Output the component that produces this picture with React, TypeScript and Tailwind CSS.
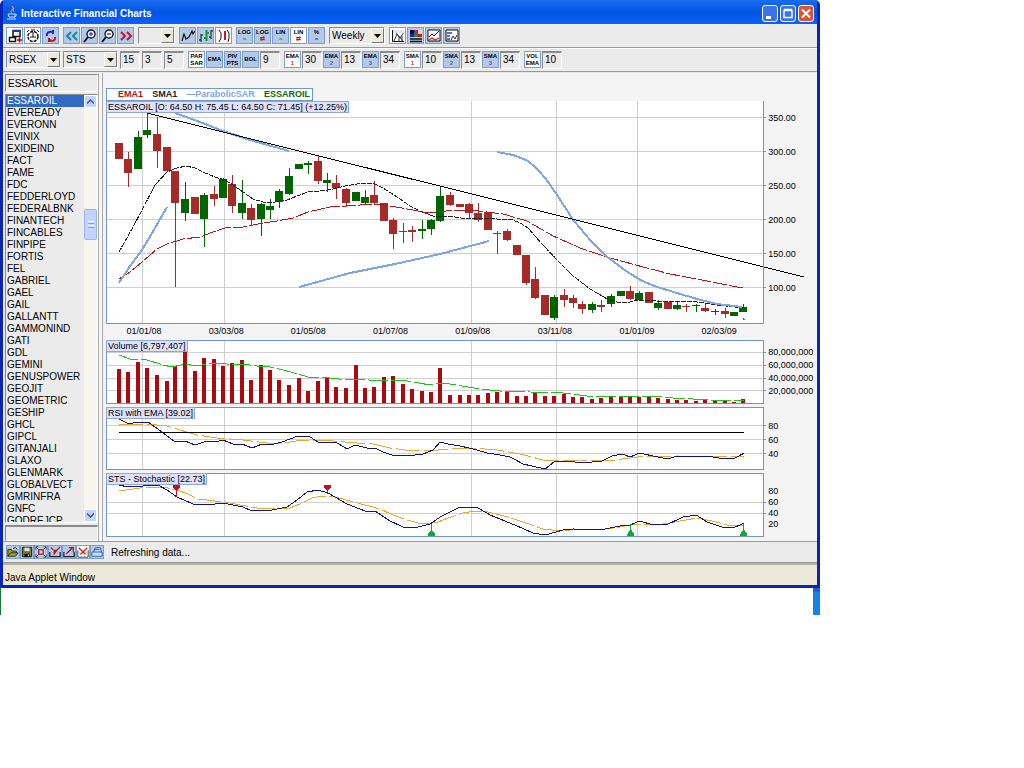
import React from 'react'

// Symbols shown in the left list
const symbols = [
  'ESSAROIL', 'EVEREADY', 'EVERONN', 'EVINIX', 'EXIDEIND', 'FACT', 'FAME', 'FDC', 'FEDDERLOYD',
  'FEDERALBNK', 'FINANTECH', 'FINCABLES', 'FINPIPE', 'FORTIS', 'FEL', 'GABRIEL', 'GAEL', 'GAIL',
  'GALLANTT', 'GAMMONIND', 'GATI', 'GDL', 'GEMINI', 'GENUSPOWER', 'GEOJIT', 'GEOMETRIC', 'GESHIP',
  'GHCL', 'GIPCL', 'GITANJALI', 'GLAXO', 'GLENMARK', 'GLOBALVECT', 'GMRINFRA', 'GNFC', 'GODREJCP',
]

const dates = ['01/01/08', '03/03/08', '01/05/08', '01/07/08', '01/09/08', '03/11/08', '01/01/09', '02/03/09']

// x, wick top, body top, body bottom, wick bottom, up (1) or down (0)
const candles = [
  [119, 143, 143, 159, 159, 0], [128, 152, 159, 173, 187, 0], [138, 131, 137, 169, 169, 1],
  [147, 113, 130, 135, 138, 1], [157, 117, 134, 151, 168, 0], [167, 147, 147, 171, 171, 0],
  [175, 171, 171, 203, 287, 0], [185, 182, 199, 213, 221, 1], [195, 197, 197, 214, 214, 0],
  [204, 193, 195, 219, 247, 1], [214, 186, 194, 199, 206, 0], [223, 178, 179, 198, 198, 1],
  [232, 175, 184, 206, 213, 0], [242, 180, 203, 213, 219, 1], [251, 204, 208, 220, 225, 0],
  [261, 203, 204, 219, 236, 1], [270, 199, 206, 210, 219, 1], [279, 189, 191, 202, 208, 1],
  [289, 168, 176, 194, 195, 1], [299, 164, 164, 169, 169, 1], [308, 161, 163, 165, 174, 1],
  [318, 156, 161, 181, 184, 0], [327, 173, 180, 183, 192, 1], [336, 175, 183, 188, 199, 0],
  [346, 188, 189, 203, 206, 0], [356, 192, 192, 201, 201, 1], [365, 190, 197, 203, 204, 1],
  [374, 181, 195, 203, 204, 0], [384, 203, 203, 221, 221, 0], [393, 218, 220, 234, 249, 0],
  [403, 223, 231, 232, 243, 0], [412, 226, 230, 232, 242, 0], [422, 220, 229, 231, 239, 1],
  [431, 219, 220, 229, 235, 1], [440, 186, 196, 221, 222, 1], [450, 192, 195, 205, 206, 0],
  [460, 204, 204, 207, 207, 0], [469, 203, 204, 213, 219, 0], [478, 203, 213, 220, 222, 0],
  [488, 212, 212, 230, 230, 0], [497, 231, 233, 234, 254, 0], [507, 229, 231, 240, 241, 0],
  [517, 245, 245, 255, 255, 0], [526, 255, 255, 283, 285, 0], [535, 267, 279, 298, 299, 0],
  [545, 295, 295, 315, 315, 0], [554, 295, 297, 318, 320, 1], [564, 289, 295, 300, 307, 0],
  [573, 295, 298, 303, 308, 0], [582, 301, 304, 309, 314, 0], [592, 302, 304, 310, 313, 1],
  [601, 300, 305, 307, 312, 0], [611, 294, 296, 304, 307, 1], [621, 291, 291, 296, 296, 1],
  [630, 286, 291, 299, 300, 0], [639, 291, 293, 300, 301, 1], [649, 292, 292, 303, 303, 0],
  [658, 300, 303, 308, 310, 1], [668, 302, 302, 309, 309, 0], [677, 301, 305, 309, 310, 1],
  [686, 304, 306, 307, 312, 0], [696, 304, 305, 306, 312, 1], [705, 304, 308, 311, 312, 0],
  [715, 309, 311, 312, 315, 1], [725, 308, 311, 314, 318, 0], [734, 312, 312, 316, 316, 1],
  [743, 304, 307, 312, 312, 1],
]

// Top of every volume bar, one for each candle
const volumes = [
  369, 372, 362, 368, 375, 381, 366, 352, 371, 358, 359, 366, 363, 360, 380, 365, 370, 380, 385, 378,
  391, 381, 378, 387, 388, 365, 388, 387, 377, 376, 384, 389, 391, 392, 368, 395, 395, 395, 395, 393,
  392, 392, 396, 396, 393, 396, 396, 394, 397, 397, 399, 398, 396, 396, 396, 397, 397, 398, 399, 400,
  400, 401, 400, 401, 401, 402, 399,
]

const sma = '119,252 133,227 142,210 155,185 167,172 177,168 186,166 195,168 205,173 215,177 225,180 233,185 243,192 253,199 263,202 275,202 287,200 297,196 308,192 320,191 333,189 345,186 357,184 367,183 375,184 383,188 397,197 410,206 422,212 433,216 443,216 455,217 467,219 480,218 497,219 510,219 520,223 528,228 540,242 557,260 573,276 590,289 607,299 617,302 630,302 637,300 657,301 697,302 717,305 743,308'
const ema = '119,279 130,272 142,262 157,249 167,244 183,239 200,237 213,232 225,228 243,227 263,223 277,221 293,218 308,212 330,207 347,206 373,204 390,206 413,210 423,212 437,212 455,210 478,211 503,214 527,221 553,236 580,248 610,258 643,267 670,274 707,281 737,287 744,287'
const sar = [
  '119,283 130,266 142,250 155,228 167,207',
  '175,113 200,122 223,131 250,140 289,151',
  '299,287 350,273 395,264 440,254 489,241',
  '497,152 513,155 528,161 537,169 545,178 557,195 573,220 590,240 607,257 623,269 640,280 657,287 680,294 697,299 717,304 742,307',
]
const volumeAvg = '119,355 130,359 147,360 163,365 172,367 185,364 197,366 213,363 227,364 243,364 257,366 270,367 287,371 308,377 330,378 347,380 360,379 377,381 400,380 413,382 430,385 441,383 450,384 480,389 500,391 530,392 563,393 587,396 613,396 650,396 673,398 693,399 710,400 730,400 744,401'
const rsi = '119,419 129,424 137,422 148,422 162,432 175,442 185,441 195,445 207,441 215,442 223,440 233,444 242,444 252,448 262,444 270,445 282,442 298,436 310,437 318,442 337,443 347,449 355,445 367,448 375,448 383,452 392,455 415,455 423,454 433,450 440,442 448,444 460,446 473,449 487,453 500,455 510,457 523,464 545,469 555,461 567,461 582,463 602,461 612,456 622,454 630,457 639,453 653,456 668,459 677,456 697,456 713,457 725,459 735,458 744,453'
const rsiEma = '119,424 147,424 167,426 180,430 197,435 217,438 243,440 267,443 283,443 303,440 333,441 357,443 373,444 390,448 413,451 438,450 450,449 473,448 497,450 520,454 543,460 580,460 607,461 637,457 677,456 723,457 744,456'
const sts = '119,485 128,487 158,485 167,490 177,497 193,504 215,504 223,503 243,507 252,511 272,510 287,507 297,500 307,492 318,490 328,493 347,504 365,511 375,511 390,521 403,527 418,527 430,524 440,517 460,507 478,508 490,515 517,526 533,533 545,535 563,530 573,529 600,530 620,526 630,525 639,521 650,524 668,524 683,517 696,515 707,522 725,528 735,527 744,523'
const stsAvg = '119,491 133,489 147,487 168,488 177,490 188,494 198,499 215,501 225,502 240,505 257,508 275,509 290,508 300,504 312,498 322,496 335,497 350,501 365,505 380,509 393,515 407,520 422,524 438,522 448,518 463,513 475,511 488,512 508,517 523,522 543,529 560,531 580,529 605,529 620,527 635,524 663,524 680,521 697,518 712,521 727,525 744,525'

// Grid, frame and content of one chart panel
type PanelProps = {
  label: string
  top: number
  height: number
  rows: number[]
  size: string
  openTop?: boolean
  children: React.ReactNode
}

const Panel = ({ label, top, height, rows, size, openTop, children }: PanelProps) => {
  const bottom = top + height - 1
  return (
    <div className={`relative min-w-0 flex-1 bg-white ${size}`}>
      <svg
        className="block h-full w-full overflow-visible"
        viewBox={`106 ${top} 658 ${height}`}
        preserveAspectRatio="none"
        fill="none"
        shapeRendering="crispEdges"
      >
        {rows.map((y) => (
          <g key={y}>
            <path d={`M107 ${y + 0.5}H763`} stroke="#cfcfcf" />
            <path d={`M764 ${y + 0.5}h2`} stroke="#6f94c8" />
          </g>
        ))}
        {[142, 224, 471, 556, 637].map((x) => (
          <path key={x} d={`M${x + 0.5} ${top}V${bottom}`} stroke="#cfcfcf" />
        ))}
        {children}
        <path
          d={`M106.5 ${top}V${bottom + 0.5}H763.5V${top}`}
          stroke="#6f94c8"
        />
        {!openTop && <path d={`M106 ${top + 0.5}H764`} stroke="#6f94c8" />}
      </svg>
      <span className="absolute top-0 left-0 border border-[#8fa6da] bg-[#dfe1fa] px-px text-[9px] leading-[10px] whitespace-pre">
        {label}
      </span>
    </div>
  )
}

const Axis = ({ values, className }: { values: string[]; className: string }) => (
  <ul className={`w-[53px] shrink-0 pl-1 text-[9px] ${className}`}>
    {values.map((v) => (
      <li key={v}>{v}</li>
    ))}
  </ul>
)

// Drawings of the toolbar buttons, on a 14 x 14 grid
const drawings: Record<string, React.ReactNode> = {
  windows: (
    <>
      <path d="M5 1.5h7v6H5zM1.5 8.5h6v4h-6z" stroke="#111" strokeWidth="1.5" />
      <path d="M5 2h7" stroke="#1a3bb5" strokeWidth="2" />
      <path d="M9 11h5M11.500 8.500v5" stroke="#c00" strokeWidth="1.500" />
    </>
  ),
  clock: (
    <>
      <circle cx="7" cy="7.500" r="5" stroke="#111" strokeDasharray="3 1" strokeWidth="1.500" />
      <path d="M7 3v5M4 8h6M5 1h4M1 3l2-2M11 1l2 2" stroke="#111" />
    </>
  ),
  refresh: (
    <>
      <path d="M3 7V5q1-3 6-2M9 1v4" stroke="#1c2fc0" strokeWidth="2" />
      <path d="M11 8v2q-1 3-6 1M5 9v4" stroke="#c01818" strokeWidth="2" />
    </>
  ),
  back: <path d="M6 3L2 7l4 4M12 3L8 7l4 4" stroke="#128a9a" strokeWidth="2" />,
  forward: <path d="M2 3l4 4-4 4M8 3l4 4-4 4" stroke="#c01828" strokeWidth="2" />,
  zoomIn: (
    <>
      <circle cx="8" cy="5" r="4" fill="#e8efff" stroke="#111" strokeWidth="1.300" />
      <path d="M5 8l-4 5" stroke="#111" strokeWidth="2" />
      <path d="M6 5h4M8 3v4" stroke="#1414c0" />
    </>
  ),
  zoomOut: (
    <>
      <circle cx="8" cy="5" r="4" fill="#f4f4f4" stroke="#111" strokeWidth="1.300" />
      <path d="M5 8l-4 5" stroke="#111" strokeWidth="2" />
      <path d="M6 5h4" stroke="#111" />
    </>
  ),
  line: <path d="M1 12l2-7 2 5 3-2 3-6 1 3 2-3" stroke="#111" strokeWidth="1.200" />,
  candle: (
    <>
      <path d="M2 5v8M0 11h2M2 6h2M12 1v9M10 8h2M12 2h2" stroke="#111" />
      <path d="M7.500 1v11M5 9h2M8 4h2" stroke="#0a9a3a" strokeWidth="2" />
    </>
  ),
  bars: (
    <>
      <path d="M2 1l2 3v5l-2 4M10 1l2 3v5l-1 4" stroke="#111" />
      <path d="M8 2v9" stroke="#c81818" strokeWidth="2" />
    </>
  ),
  chart: (
    <>
      <path d="M1.500 1v11.500H13" stroke="#111" />
      <path d="M3 12l3-7 3 4 4-6M4 3l8 9M8 12V8M11 12V7" stroke="#333" />
      <path d="M2 1h11v3H2z" fill="#d9e6f8" />
    </>
  ),
  palette: (
    <>
      <path d="M1 1h4v4H1z" fill="#111" />
      <path d="M5 1h4v4H5z" fill="#b02090" />
      <path d="M10 1h3v4h-3z" fill="#f0e860" />
      <path d="M1 5h4v3H1z" fill="#2020c0" />
      <path d="M5 5h4v3H5z" fill="#12903a" />
      <path d="M9 5h4v3H9z" fill="#c81818" />
      <path d="M1 10h12M1 12.500h12" stroke="#111" strokeWidth="1.500" />
    </>
  ),
  study: (
    <>
      <path d="M1 1h12v11H1z" fill="#fff" stroke="#111" />
      <path d="M2 8l3-3 2 2 5-5" stroke="#111" />
      <path d="M2 11l3-2 3 2 4-2" stroke="#d02020" strokeWidth="1.300" />
    </>
  ),
  table: (
    <>
      <path d="M1 1h12v11H1z" fill="#fff" stroke="#111" />
      <path d="M2 4h5M2 7h3M2 10h3" stroke="#2040c0" strokeWidth="1.500" />
      <path d="M6 11l2-4 2 3 2-4" stroke="#333" />
    </>
  ),
  open: (
    <>
      <path d="M1 12V4h4l1 2h5v2M1 12l3-4h9l-3 4z" fill="#a8a010" stroke="#222" />
      <path d="M7 3q3-3 5 1" stroke="#111" />
    </>
  ),
  save: (
    <>
      <path d="M1.500 1.500h11v11h-11z" fill="#77751a" stroke="#111" />
      <path d="M4 2h6v4H4z" fill="#dde" />
      <path d="M4 9h6v4H4z" fill="#111" />
      <path d="M8 10h1v2H8z" fill="#fff" />
    </>
  ),
  fit: (
    <>
      <path d="M1 4V1h3M10 1h3v3M13 10v3h-3M4 13H1v-3M1 1l3 3M13 1l-3 3M13 13l-3-3M1 13l3-3" stroke="#333" />
      <path d="M4.500 4.500h5v5h-5z" fill="#f6d8d8" stroke="#a01818" strokeWidth="1.500" />
    </>
  ),
  pencil: (
    <>
      <path d="M1 7v5.500h12V7" stroke="#222" strokeWidth="1.500" />
      <path d="M2 2l3 2M6 9V5h3zM8 6l5-5" fill="#b01818" stroke="#b01818" strokeWidth="1.500" />
    </>
  ),
  arrow: (
    <>
      <path d="M1 7v5.500h12V7" stroke="#222" strokeWidth="1.500" />
      <path d="M4 9l7-7M7 2h5v5" stroke="#b01818" strokeWidth="1.500" />
    </>
  ),
  cross: (
    <>
      <path d="M1 5v8h12V5" stroke="#222" />
      <path d="M2 2l5 5 5-5M4 10l3-3 3 3" stroke="#d02020" strokeWidth="1.500" />
      <path d="M3 7l2 3M11 7l-2 3" stroke="#d8a020" />
    </>
  ),
  print: <path d="M3 7l2-5h6l1 5M1 7h12v5H1zM4 4h6" fill="#c4dafa" stroke="#1f5aa8" />,
}

type ToolProps = {
  name: string
  icon?: string
  text?: string
  mark?: string
  markColor?: string
  white?: boolean
}

const Tool = ({ name, icon, text, mark, markColor, white }: ToolProps) => (
  <button
    type="button"
    aria-label={name}
    className={`flex h-[17px] w-[17px] shrink-0 flex-col items-center justify-center overflow-hidden border border-[#7ba0d0] font-bold ${white ? 'bg-white' : 'bg-[#b4c9e8]'}`}
  >
    {icon && (
      <svg width="14" height="14" viewBox="0 0 14 14" fill="none">
        {drawings[icon]}
      </svg>
    )}
    {text && <span className="text-[6px] leading-[7px]">{text}</span>}
    {mark && <span className={`text-[6px] leading-[7px] ${markColor}`}>{mark}</span>}
  </button>
)

const Group = ({ items }: { items: ToolProps[] }) => (
  <div className="flex gap-px">
    {items.map((item) => (
      <Tool key={item.name} {...item} />
    ))}
  </div>
)

const Combo = ({ name, value, width }: { name: string; value: string; width: string }) => (
  <div className={`flex h-[17px] shrink-0 border border-[#8a8a8a] border-r-white border-b-white ${width}`}>
    <select aria-label={name} className="min-w-0 flex-1 appearance-none pl-[2px] text-[10px] leading-[14px] outline-none">
      <option>{value}</option>
    </select>
    <span className="pointer-events-none flex w-[13px] items-center justify-center border border-white border-r-[#777] border-b-[#777] bg-[#ece9d8]">
      <svg width="7" height="4" viewBox="0 0 7 4">
        <path d="M0 0h7L3.500 4z" />
      </svg>
    </span>
  </div>
)

const Field = ({ name, value }: { name: string; value: string }) => (
  <input
    aria-label={name}
    defaultValue={value}
    className="h-[18px] w-[20px] shrink-0 border border-t-2 border-[#8a8a8a] border-r-white border-b-white pb-[2px] pl-[2px] text-[10px] outline-none"
  />
)

const Average = ({ text, mark, value, white }: { text: string; mark: string; value: string; white?: boolean }) => (
  <div className="flex gap-px">
    <Tool name={`${text} ${mark}`} text={text} mark={mark} markColor={text === 'VOL' ? 'text-black' : white ? 'text-[#c03010]' : 'text-[#6a5ab0]'} white={white} />
    <Field name={`${text} ${mark} period`} value={value} />
  </div>
)

const TitleBar = () => (
  <header className="flex h-6 items-center gap-[3px] bg-linear-to-b from-[#1a6cf0] via-[#0054e3] to-[#0a62fb] px-[3px] pt-[2px]">
    <svg width="12" height="14" viewBox="0 0 12 14" fill="none">
      <path d="M6 0q3 2 0 4t0 3M8 2q-2 2 0 4" stroke="#f0a090" />
      <path d="M2 8h7v3H3zM9 8q3 0 0 3M1 13h9" stroke="#cfdcff" />
    </svg>
    <h1 className="text-[10px] font-bold text-white">Interactive Financial Charts</h1>
    <div className="ml-auto flex gap-[2px]">
      <button type="button" aria-label="Minimize" className="h-[17px] w-4 rounded-[3px] border border-white bg-[#3c72ea]">
        <svg className="h-full w-full" viewBox="0 0 14 15"><path d="M3 10h5v3H3z" fill="#fff" /></svg>
      </button>
      <button type="button" aria-label="Maximize" className="h-[17px] w-4 rounded-[3px] border border-white bg-[#3c72ea]">
        <svg className="h-full w-full" viewBox="0 0 14 15" fill="none"><path d="M3 4.500h8v7H3zM3 3.500h8" stroke="#fff" strokeWidth="1.400" /></svg>
      </button>
      <button type="button" aria-label="Close" className="h-[17px] w-4 rounded-[3px] border border-white bg-[#dc5434]">
        <svg className="h-full w-full" viewBox="0 0 14 15" fill="none"><path d="M3 3.500l8 8M11 3.500l-8 8" stroke="#fff" strokeWidth="2" /></svg>
      </button>
    </div>
  </header>
)

const bar = 'flex items-center gap-1 border-b border-[#9a9a9a] bg-[#ebebeb] pl-[3px]'

const Toolbars = () => (
  <>
    <div className={`${bar} h-6`}>
      <Group
        items={[
          { name: 'Windows', icon: 'windows', white: true },
          { name: 'Timer', icon: 'clock', white: true },
          { name: 'Refresh', icon: 'refresh' },
        ]}
      />
      <Group
        items={[
          { name: 'Back', icon: 'back' },
          { name: 'Zoom in', icon: 'zoomIn' },
          { name: 'Zoom out', icon: 'zoomOut' },
          { name: 'Forward', icon: 'forward' },
        ]}
      />
      <Combo name="Range" value="" width="w-[37px]" />
      <Group
        items={[
          { name: 'Line', icon: 'line' },
          { name: 'Candles', icon: 'candle' },
          { name: 'Bars', icon: 'bars', white: true },
        ]}
      />
      <Group
        items={[
          { name: 'Log green', text: 'LOG', mark: '=', markColor: 'text-[#0a9a3a]' },
          { name: 'Log red', text: 'LOG', mark: '⇄', markColor: 'text-[#c81818]' },
          { name: 'Linear green', text: 'LIN', mark: '=', markColor: 'text-[#0a9a3a]' },
          { name: 'Linear red', text: 'LIN', mark: '⇄', markColor: 'text-[#c81818]', white: true },
          { name: 'Percent', text: '%', mark: '=', markColor: 'text-[#2020c0]' },
        ]}
      />
      <Combo name="Period" value="Weekly" width="w-[56px]" />
      <Group
        items={[
          { name: 'Chart', icon: 'chart', white: true },
          { name: 'Colours', icon: 'palette' },
          { name: 'Study', icon: 'study' },
          { name: 'Data', icon: 'table' },
        ]}
      />
    </div>
    <div className={`${bar} h-6 border-t border-t-white`}>
      <div className="flex gap-[2px]">
        <Combo name="Exchange" value="RSEX" width="w-[55px]" />
        <Combo name="Indicator" value="STS" width="w-[55px]" />
        <Field name="K period" value="15" />
        <Field name="K slowing" value="3" />
        <Field name="D period" value="5" />
      </div>
      <div className="flex gap-px">
        <Group
          items={[
            { name: 'Parabolic SAR', text: 'PAR', mark: 'SAR', white: true },
            { name: 'EMA', text: 'EMA' },
            { name: 'Pivot points', text: 'PIV', mark: 'PTS' },
            { name: 'BOL', text: 'BOL' },
          ]}
        />
        <Field name="BOL period" value="9" />
      </div>
      <div className="flex gap-px">
        <Average text="EMA" mark="1" value="30" white />
        <Average text="EMA" mark="2" value="13" />
        <Average text="EMA" mark="3" value="34" />
      </div>
      <div className="flex gap-px">
        <Average text="SMA" mark="1" value="10" white />
        <Average text="SMA" mark="2" value="13" />
        <Average text="SMA" mark="3" value="34" />
      </div>
      <Average text="VOL" mark="EMA" value="10" white />
    </div>
  </>
)

const ScrollBar = () => (
  <div className="flex w-[13px] shrink-0 flex-col bg-[#f6f5f0]">
    <button type="button" aria-label="Scroll up" className="flex h-[13px] items-center justify-center rounded-[2px] border border-white bg-[#c3d3fb]">
      <svg width="7" height="5" viewBox="0 0 7 5" fill="none"><path d="M0 4.500L3.500 1 7 4.500" stroke="#42558a" strokeWidth="1.500" /></svg>
    </button>
    <div className="flex flex-1 flex-col pt-[101px]">
      <div className="flex h-[31px] flex-col items-center justify-center gap-px rounded-[2px] border border-[#9db6ee] bg-[#c3d3fb]">
        <i className="h-px w-[6px] bg-white" />
        <i className="h-px w-[6px] bg-[#8ca4e0]" />
        <i className="h-px w-[6px] bg-white" />
        <i className="h-px w-[6px] bg-[#8ca4e0]" />
      </div>
    </div>
    <button type="button" aria-label="Scroll down" className="flex h-[13px] items-center justify-center rounded-[2px] border border-white bg-[#c3d3fb]">
      <svg width="7" height="5" viewBox="0 0 7 5" fill="none"><path d="M0 .5L3.500 4 7 .5" stroke="#42558a" strokeWidth="1.500" /></svg>
    </button>
  </div>
)

const Sidebar = () => (
  <aside className="flex w-[93px] shrink-0 flex-col gap-[2px] pt-px">
    <input
      aria-label="Symbol"
      defaultValue="ESSAROIL"
      className="h-[18px] w-full border border-[#8a8a8a] border-r-white border-b-white pl-[2px] text-[10px] outline-none"
    />
    <div className="flex h-[429px] border border-[#8a8a8a] border-r-white border-b-white">
      <ul role="listbox" aria-label="Symbols" className="min-w-0 flex-1 overflow-hidden text-[10px] leading-[12px]">
        {symbols.map((s, i) => (
          <li key={s} role="option" aria-selected={i === 0} className={i === 0 ? 'bg-[#316ac5] pl-px text-white' : 'pl-px'}>
            {s}
          </li>
        ))}
      </ul>
      <ScrollBar />
    </div>
    <div className="flex-1 border border-t-2 border-[#8a8a8a] border-r-white border-b-white" />
  </aside>
)

const Charts = () => (
  <main className="min-w-0 flex-1 border-l border-[#a8a8a8] bg-[#f4f4f4] pt-[15px] pb-1">
    <div className="ml-[3px] flex h-[13px] w-[207px] items-center justify-between border border-[#7096d0] bg-white pr-[2px] pl-[11px] text-[9px] font-bold">
      <span className="text-[#b81414]">EMA1</span>
      <span className="text-[#222]">SMA1</span>
      <span className="text-[#82a4dc]">—ParabolicSAR</span>
      <span className="text-[#0a6a0a]">ESSAROIL</span>
    </div>

    {/* Price */}
    <div className="flex pl-[3px]">
      <Panel
        label="ESSAROIL [O: 64.50 H: 75.45 L: 64.50 C: 71.45] (+12.25%)"
        top={101}
        height={223}
        rows={[117, 151, 185, 219, 253, 287]}
        size="h-[223px]"
        openTop
      >
        {candles.map(([x, high, top, bottom, low, up]) => (
          <g key={x} fill={up ? '#006400' : '#a52a2a'}>
            <path d={`M${x} ${high}h1V${low}h-1z`} />
            <path d={`M${x - 4} ${top}h8V${bottom}h-8z`} />
          </g>
        ))}
        <polyline points={sma} stroke="#222" strokeDasharray="5 1" />
        <polyline points={ema} stroke="#b01818" strokeDasharray="14 2" />
        {sar.map((points) => (
          <polyline key={points} points={points} stroke="#7da5de" strokeWidth="2" />
        ))}
        <path d="M147 113L804 277" stroke="#000" />
        <path d="M742 320h3l-1.500-2z" fill="#12903a" />
      </Panel>
      <Axis values={['350.00', '300.00', '250.00', '200.00', '150.00', '100.00']} className="leading-[34px]" />
    </div>

    <ul className="grid h-4 grid-cols-8 pr-[57px] text-center text-[9px] leading-[15px]">
      {dates.map((d) => (
        <li key={d}>{d}</li>
      ))}
    </ul>

    <div className="flex flex-col gap-[3px] pl-[3px]">
      <div className="flex">
        <Panel label="Volume [6,797,407]" top={340} height={64} rows={[352, 365, 378, 390]} size="h-[64px]">
          {volumes.map((y, i) => (
            <path key={candles[i][0]} d={`M${candles[i][0] - 2} ${y}h4V403h-4z`} fill="#a80c10" />
          ))}
          <polyline points={volumeAvg} stroke="#1fc01f" strokeDasharray="20 3" />
        </Panel>
        <Axis values={['80,000,000', '60,000,000', '40,000,000', '20,000,000']} className="pt-[6px] leading-[13px]" />
      </div>

      <div className="flex">
        <Panel label="RSI with EMA [39.02]" top={407} height={63} rows={[425, 439, 453]} size="h-[63px]">
          <polyline points={rsiEma} stroke="#e0ac30" strokeDasharray="24 4" />
          <polyline points={rsi} stroke="#14147c" />
          <path d="M119 432.500H744" stroke="#000" />
        </Panel>
        <Axis values={['80', '60', '40']} className="pt-3 leading-[14px]" />
      </div>

      <div className="flex">
        <Panel label="STS - Stochastic [22.73]" top={473} height={64} rows={[502, 513]} size="h-[64px]">
          <polyline points={stsAvg} stroke="#e0ac30" strokeDasharray="24 3" />
          <polyline points={sts} stroke="#14147c" />
          {[176, 327].map((x) => (
            <path key={x} d={`M${x - 3} 485h7v2l-3 4v${x === 176 ? 6 : 3}h-1v-${x === 176 ? 6 : 3}l-3-4z`} fill="#c01028" />
          ))}
          {[431, 630, 743].map((x) => (
            <path key={x} d={`M${x - 3} 536v-2l3-4v-6h1v6l3 4v2z`} fill="#12a832" />
          ))}
        </Panel>
        <Axis values={['80', '60', '40', '20']} className="pt-[13px] leading-[11px]" />
      </div>
    </div>
  </main>
)

const App = () => {
  return (
    <div className="min-h-screen bg-white font-['Liberation_Sans',Arial,sans-serif] text-black">
      <div className="w-[80.1%]">
        <div className="rounded-t-[5px] border-x-[3px] border-b-[3px] border-[#0a24b4] bg-[#ebebeb]">
          <TitleBar />
          <Toolbars />
          <div className="flex pt-px pl-[2px]">
            <Sidebar />
            <div className="w-[4px] shrink-0 border-l border-[#a8a8a8] bg-[#f6f6f6]" />
            <Charts />
          </div>
          <div className="flex h-[22px] items-center gap-[7px] border-y border-[#9a9a9a] pl-[3px]">
            <div className="flex">
              {['open', 'save', 'fit', 'pencil', 'arrow', 'cross', 'print'].map((icon) => (
                <button
                  key={icon}
                  type="button"
                  aria-label={icon}
                  className={`flex h-[14px] w-[14px] items-center justify-center border border-[#7ba0d0] ${icon === 'cross' ? 'bg-white' : 'bg-[#b4c9e8]'}`}
                >
                  <svg width="12" height="12" viewBox="0 0 14 14" fill="none">
                    {drawings[icon]}
                  </svg>
                </button>
              ))}
            </div>
            <p className="text-[10px]">Refreshing data...</p>
          </div>
          <footer className="flex h-[22px] items-end border-t-2 border-[#b4b2a4] bg-[#ece9d8] pl-[2px] text-[10px] leading-[14px]">
            Java Applet Window
          </footer>
        </div>
        {/* Desktop strip under the window */}
        <div className="flex h-[27px] justify-between">
          <div className="w-px bg-[#1c7a3c]" />
          <div className="w-[7px] border-t-4 border-[#2a5cd0] bg-[#1484e4]" />
        </div>
      </div>
    </div>
  )
}

export default App
